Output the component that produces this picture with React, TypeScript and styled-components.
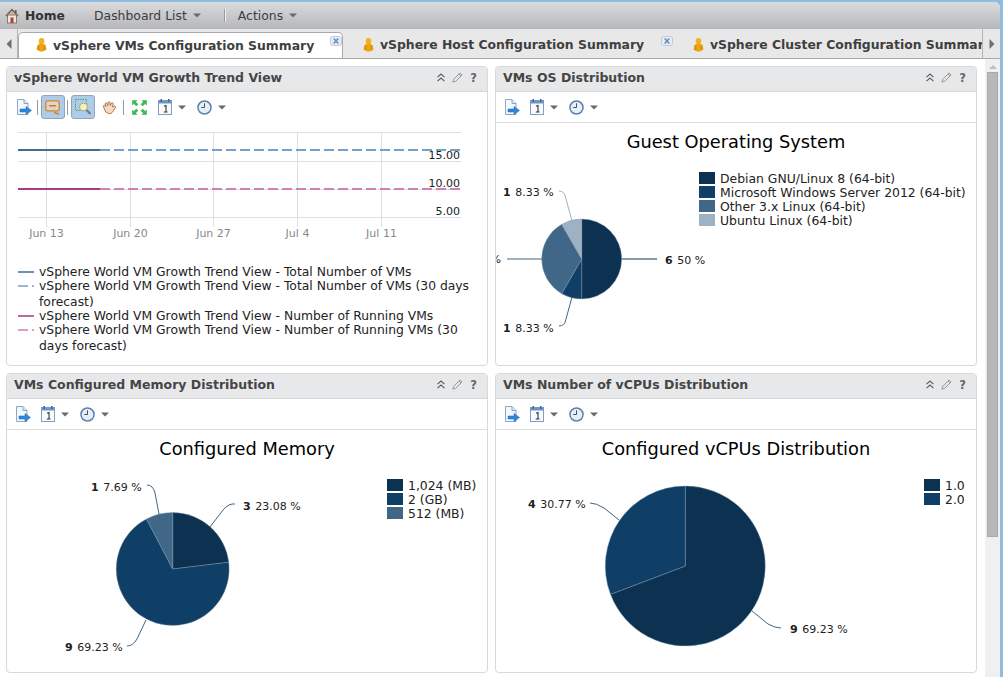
import styled, { createGlobalStyle } from "styled-components";

const GlobalStyle = createGlobalStyle`
  html, body {
    margin: 0;
    padding: 0;
    background: #8fbde0;
    overflow: hidden;
  }
  * {
    box-sizing: border-box;
  }
`;

const Page = styled.div`
  width: 1003px;
  height: 677px;
  padding: 2px 3px 0 0;
  background: #8fbde0;
  font-family: "DejaVu Sans", sans-serif;
  overflow: hidden;
`;

const Frame = styled.div`
  width: 1000px;
  height: 675px;
  display: flex;
  flex-direction: column;
  background: #fff;
  border-top-right-radius: 6px;
  overflow: hidden;
`;

const TopBar = styled.div`
  height: 27px;
  flex: none;
  display: flex;
  align-items: center;
  padding-left: 5px;
  background: linear-gradient(#dadbdd, #b6b7bb);
  color: #3c3c3c;
  font-size: 12.4px;
`;

const HomeLink = styled.span`
  margin-left: 6px;
  width: 69px;
  font-weight: bold;
  font-size: 12.3px;
  color: #333;
`;

const MenuItem = styled.span`
  display: flex;
  align-items: center;
  gap: 6px;
`;

const MenuDivider = styled.span`
  width: 2px;
  height: 13px;
  margin: 0 12px 0 23px;
  background: #f0f0f0;
  border-left: 1px solid #999;
`;

const TabBar = styled.div`
  height: 30px;
  flex: none;
  display: flex;
  background: #e8e8e8;
  border-bottom: 1px solid #a9a9a9;
`;

const ScrollButton = styled.div<{ $end?: boolean }>`
  width: 18px;
  flex: none;
  display: flex;
  align-items: center;
  justify-content: center;
  border-style: solid;
  border-color: #b5b5b5;
  border-width: ${(p) => (p.$end ? "0 0 0 1px" : "0 1px 0 0")};
  background: #e8e8e8;
`;

const TabStrip = styled.div`
  flex: 1;
  min-width: 0;
  display: flex;
  overflow: hidden;
`;

const Tab = styled.div<{ $active?: boolean; $w: number; $pad: number }>`
  position: relative;
  flex: none;
  width: ${(p) => p.$w}px;
  height: 27px;
  margin-top: 3px;
  padding: 0 0 2px ${(p) => p.$pad}px;
  display: flex;
  align-items: center;
  gap: 6px;
  background: ${(p) => (p.$active ? "#fff" : "transparent")};
  border: ${(p) => (p.$active ? "1px solid #a9a9a9" : "none")};
  border-bottom: none;
  border-radius: 5px 5px 0 0;
  color: #3f3f3f;
  font-weight: bold;
  font-size: 12.4px;
  white-space: nowrap;
`;

const TabClose = styled.span<{ $top: number }>`
  position: absolute;
  right: 0;
  top: ${(p) => p.$top}px;
  display: flex;
`;

const Main = styled.div`
  flex: 1;
  min-height: 0;
  display: flex;
  background: #fff;
`;

const Dashboard = styled.div`
  width: 985px;
  flex: none;
  display: grid;
  grid-template-columns: 482px 482px;
  grid-template-rows: 300px 300px;
  gap: 7px;
  padding: 7px 0 0 6px;
`;

const ScrollTrack = styled.div`
  width: 15px;
  flex: none;
  display: flex;
  flex-direction: column;
  align-items: flex-start;
  background: #f0f0f0;
  padding: 6px 0 0 2px;
`;

const ScrollUp = styled.svg`
  margin: 0 0 3px 2px;
`;

const ScrollThumb = styled.div`
  width: 11px;
  height: 465px;
  background: #b8b8b8;
  border: 1px solid #a8a8a8;
`;

const Panel = styled.section`
  display: flex;
  flex-direction: column;
  border: 1px solid #d9d9d9;
  border-radius: 4px;
  overflow: hidden;
  background: #fff;
`;

const PanelHeader = styled.header`
  height: 25px;
  flex: none;
  display: flex;
  align-items: center;
  justify-content: space-between;
  padding: 0 10px 3px 7px;
  background: #e7e8ea;
  border-bottom: 1px solid #d6d6d6;
`;

const PanelTitle = styled.h2`
  margin: 0;
  font-size: 12.5px;
  font-weight: bold;
  color: #454545;
  white-space: nowrap;
`;

const PanelActions = styled.div`
  display: flex;
  align-items: center;
  gap: 7px;
`;

const Toolbar = styled.div<{ $divided?: boolean }>`
  height: 31px;
  flex: none;
  display: flex;
  align-items: center;
  padding-left: ${(p) => (p.$divided ? 8 : 9)}px;
  border-bottom: 1px solid ${(p) => (p.$divided ? "#dedede" : "transparent")};
`;

const ToolButton = styled.span<{ $selected?: boolean; $gap?: number }>`
  width: ${(p) => (p.$selected ? "24px" : "auto")};
  height: 24px;
  flex: none;
  display: flex;
  align-items: center;
  justify-content: center;
  margin-right: ${(p) => p.$gap ?? 0}px;
  background: ${(p) => (p.$selected ? "#aecbe9" : "transparent")};
  border: ${(p) => (p.$selected ? "1px solid #8fa5bd" : "none")};
  border-radius: 3px;
`;

const ToolDivider = styled.span<{ $left: number; $right: number }>`
  width: 1px;
  height: 15px;
  flex: none;
  margin: 0 ${(p) => p.$right}px 0 ${(p) => p.$left}px;
  background: #9a9a9a;
`;

const PieBody = styled.div`
  flex: 1;
  min-height: 0;
  display: flex;
  flex-direction: column;
`;

const ChartTitle = styled.h3`
  margin: 8px 0 0;
  height: 29px;
  text-align: center;
  font-size: 17.8px;
  line-height: 22px;
  font-weight: normal;
  color: #000;
`;

const ChartRow = styled.div`
  display: flex;
  align-items: flex-start;
`;

const ChartText = styled.text`
  font-family: "DejaVu Sans", sans-serif;
  font-size: 11px;
  fill: #222;
`;

const PieLegend = styled.ul<{ $left: number }>`
  margin: 11px 0 0 ${(p) => p.$left}px;
  padding: 0;
  list-style: none;
`;

const PieLegendItem = styled.li`
  display: flex;
  align-items: center;
  gap: 5px;
  height: 14px;
  font-size: 12.4px;
  color: #222;
  white-space: nowrap;
`;

const Swatch = styled.span<{ $color: string }>`
  width: 16px;
  height: 12px;
  background: ${(p) => p.$color};
`;

const TrendLegend = styled.ul`
  margin: 0;
  padding: 0 0 0 11px;
  list-style: none;
  width: 466px;
`;

const TrendItem = styled.li`
  display: flex;
  align-items: flex-start;
  gap: 5px;
  margin-top: -2px;
  font-size: 12.35px;
  line-height: 16px;
  color: #222;
`;

const TrendKey = styled.svg`
  flex: none;
  margin-top: 7px;
`;

const ChartSvg = styled.svg`
  display: block;
  flex: none;
  overflow: visible;
`;

const DARK = "#0d3251";
const MID = "#0f3f66";
const STEEL = "#406787";
const PALE = "#9fb2c3";

function slicePath(cx: number, cy: number, r: number, from: number, to: number) {
  const a0 = (from / 100) * 2 * Math.PI;
  const a1 = (to / 100) * 2 * Math.PI;
  const x0 = cx + r * Math.sin(a0);
  const y0 = cy - r * Math.cos(a0);
  const x1 = cx + r * Math.sin(a1);
  const y1 = cy - r * Math.cos(a1);
  const large = to - from > 50 ? 1 : 0;
  return `M${cx} ${cy}L${x0} ${y0}A${r} ${r} 0 ${large} 1 ${x1} ${y1}Z`;
}

type Label = { x: number; y: number; n: string; pct: string; anchor?: "end" };
type Lead = { d: string; color: string; width?: number };

function Pie({
  width,
  height,
  cx,
  cy,
  r,
  slices,
  labels,
  leads,
}: {
  width: number;
  height: number;
  cx: number;
  cy: number;
  r: number;
  slices: { v: number; color: string }[];
  labels: Label[];
  leads: Lead[];
}) {
  let acc = 0;
  return (
    <ChartSvg width={width} height={height}>
      {leads.map((l, i) => (
        <path key={i} d={l.d} fill="none" stroke={l.color} strokeWidth={l.width ?? 1} />
      ))}
      {slices.map((s, i) => {
        const d = slicePath(cx, cy, r, acc, acc + s.v);
        acc += s.v;
        return <path key={i} d={d} fill={s.color} stroke="#7f97ad" strokeWidth={0.4} />;
      })}
      {labels.map((l, i) => (
        <ChartText key={i} x={l.x} y={l.y} textAnchor={l.anchor}>
          <tspan fontWeight="bold">{l.n}</tspan>
          <tspan dx="1"> {l.pct}</tspan>
        </ChartText>
      ))}
    </ChartSvg>
  );
}

function Caret() {
  return (
    <svg width="8" height="5" viewBox="0 0 8 5">
      <path d="M0 0.5h8L4 4.5z" fill="#6a6a6a" />
    </svg>
  );
}

function HomeIcon() {
  return (
    <svg width="14" height="16" viewBox="0 0 14 16">
      <path d="M1 8L7 1.5 13 8" fill="#c9b9a8" stroke="#7d5a48" strokeWidth="1.4" />
      <rect x="2.5" y="7" width="9" height="8" fill="#ece6dc" stroke="#8b7a6c" />
      <rect x="5.5" y="9.5" width="3" height="5.5" fill="#a8452f" />
      <rect x="10" y="2" width="1.6" height="3" fill="#7d5a48" />
    </svg>
  );
}

function PersonIcon() {
  return (
    <svg width="11" height="16" viewBox="0 0 12 17">
      <ellipse cx="6" cy="4.5" rx="3" ry="3.6" fill="#f2b01e" />
      <path d="M1.5 8.5Q6 5.8 10.5 8.5L11.5 13.5Q6 18 0.5 13.5Z" fill="#eda412" />
      <rect x="2.6" y="9" width="1" height="5" fill="#c98408" />
      <rect x="8.4" y="9" width="1" height="5" fill="#c98408" />
    </svg>
  );
}

function CloseIcon() {
  return (
    <svg width="12" height="10" viewBox="0 0 12 10">
      <rect x="0.5" y="0.5" width="11" height="9" rx="2" fill="#e6edf5" stroke="#b9cde2" />
      <path d="M3.7 2.5L8.3 7.5M8.3 2.5L3.7 7.5" stroke="#6f8fb3" strokeWidth="1.7" />
    </svg>
  );
}

function Arrow({ dir }: { dir: "left" | "right" }) {
  return (
    <svg width="6" height="10" viewBox="0 0 6 10">
      <path d={dir === "left" ? "M5.5 0v10L0.5 5z" : "M0.5 0v10L5.5 5z"} fill="#6f6f6f" />
    </svg>
  );
}

function ExportIcon() {
  return (
    <svg width="16" height="17" viewBox="0 0 16 17">
      <path d="M1.5 0.5H8L12 4.5V15.5H1.5Z" fill="#f4f8fc" stroke="#8aa7c6" />
      <path d="M8 0.5V4.5H12" fill="#dbe6f1" stroke="#8aa7c6" />
      <path d="M4 10H10V7.5L15.5 11.5 10 15.5V13H4Z" fill="#2f86d8" stroke="#1d66ae" strokeWidth="0.5" />
    </svg>
  );
}

function CalendarIcon() {
  return (
    <svg width="15" height="16" viewBox="0 0 15 16">
      <rect x="0.5" y="1.5" width="13" height="14" fill="#f8fafc" stroke="#7fa0c4" />
      <rect x="0.5" y="1.5" width="13" height="3" fill="#6d94c4" />
      <rect x="2.5" y="0" width="1.5" height="3" fill="#3d6aa4" />
      <rect x="10" y="0" width="1.5" height="3" fill="#3d6aa4" />
      <path d="M6 7.2L8 6.5V13M5.8 13H9.5" fill="none" stroke="#333" strokeWidth="1.1" />
    </svg>
  );
}

function ClockIcon() {
  return (
    <svg width="15" height="15" viewBox="0 0 16 16">
      <circle cx="8" cy="8" r="7" fill="#e6eff8" stroke="#5b82ad" strokeWidth="1.6" />
      <path d="M8 3.5V8H4.5" fill="none" stroke="#444" strokeWidth="1" />
    </svg>
  );
}

function ZoomOutIcon() {
  return (
    <svg width="16" height="15" viewBox="0 0 16 15">
      <rect x="0.8" y="0.8" width="13.4" height="10" rx="1.5" fill="#dcd6c6" stroke="#d9812a" strokeWidth="1.3" />
      <rect x="4" y="5" width="7" height="1.5" fill="#cf7a24" />
      <path d="M9 12.5L14 14" stroke="#d9812a" strokeWidth="1.5" />
    </svg>
  );
}

function ZoomBoxIcon() {
  return (
    <svg width="17" height="18" viewBox="0 0 17 18">
      <rect x="0.5" y="1.5" width="11" height="11" fill="none" stroke="#3aa64a" strokeDasharray="1.2 1.2" />
      <circle cx="8.5" cy="9" r="4" fill="#f4f2b8" stroke="#a8a886" />
      <path d="M11.5 12L15.5 16" stroke="#6c7c93" strokeWidth="2.2" />
    </svg>
  );
}

function HandIcon() {
  return (
    <svg width="15" height="15" viewBox="0 0 16 15">
      <path
        d="M2 8L1.5 5.5Q2.5 4.5 3.5 5.5L4 6.5 3.5 3Q4.5 1.8 5.5 3L6.2 5.5 6.5 2Q7.5 0.8 8.6 2L8.8 5.5 10 2.8Q11 2 12 3L11.2 7 13 5.8Q14.5 5.8 14.5 7.2L11.5 12Q10 14.5 7 14 3.5 13.5 2 8Z"
        fill="#f5d9c0"
        stroke="#a06a44"
        strokeWidth="0.9"
      />
    </svg>
  );
}

function ExpandIcon() {
  return (
    <svg width="15" height="15" viewBox="0 0 15 15">
      <path
        d="M0.5 0.5H5L3.6 1.9 6 4.3 4.3 6 1.9 3.6 0.5 5ZM14.5 0.5H10L11.4 1.9 9 4.3 10.7 6 13.1 3.6 14.5 5ZM0.5 14.5H5L3.6 13.1 6 10.7 4.3 9 1.9 11.4 0.5 10ZM14.5 14.5H10L11.4 13.1 9 10.7 10.7 9 13.1 11.4 14.5 10Z"
        fill="#35c04a"
        stroke="#1e8f33"
        strokeWidth="0.4"
      />
    </svg>
  );
}

function CollapseIcon() {
  return (
    <svg width="8" height="9" viewBox="0 0 8 9">
      <path d="M0.5 4.2L4 1 7.5 4.2M0.5 8.2L4 5 7.5 8.2" fill="none" stroke="#5c5c5c" strokeWidth="1.1" />
    </svg>
  );
}

function PencilIcon() {
  return (
    <svg width="11" height="11" viewBox="0 0 12 12">
      <path d="M1 11L1.8 8 8.8 1 11 3.2 4 10.2Z" fill="#e6e7e9" stroke="#8f8f8f" />
      <path d="M7.6 2.2L9.8 4.4" stroke="#8f8f8f" />
    </svg>
  );
}

const HelpMark = styled.span`
  width: 7px;
  font-size: 11.5px;
  font-weight: bold;
  color: #666;
  line-height: 12px;
  text-align: center;
`;

function Header({ title }: { title: string }) {
  return (
    <PanelHeader>
      <PanelTitle>{title}</PanelTitle>
      <PanelActions>
        <CollapseIcon />
        <PencilIcon />
        <HelpMark>?</HelpMark>
      </PanelActions>
    </PanelHeader>
  );
}

function TimeTools() {
  return (
    <>
      <ToolButton $gap={5}>
        <CalendarIcon />
      </ToolButton>
      <ToolButton $gap={11}>
        <Caret />
      </ToolButton>
      <ToolButton $gap={6}>
        <ClockIcon />
      </ToolButton>
      <ToolButton>
        <Caret />
      </ToolButton>
    </>
  );
}

function PieTools() {
  return (
    <Toolbar $divided>
      <ToolButton $gap={10}>
        <ExportIcon />
      </ToolButton>
      <TimeTools />
    </Toolbar>
  );
}

const xTicks = [
  { x: 39.5, label: "Jun 13" },
  { x: 123.5, label: "Jun 20" },
  { x: 206.5, label: "Jun 27" },
  { x: 290.5, label: "Jul 4" },
  { x: 374.5, label: "Jul 11" },
];

const yLines = [9.5, 38.5, 66.5, 94.5];

const AxisText = styled(ChartText)<{ $muted?: boolean }>`
  fill: ${(p) => (p.$muted ? "#888" : "#222")};
`;

function TrendChart() {
  return (
    <ChartSvg width="480" height="143">
      {yLines.map((y) => (
        <line key={y} x1="11" x2="454" y1={y} y2={y} stroke="#dcdfe3" />
      ))}
      {xTicks.map((t) => (
        <line key={t.x} x1={t.x} x2={t.x} y1="9" y2="104" stroke="#dcdfe3" />
      ))}
      <line x1="11" x2="93" y1="27" y2="27" stroke="#446a8c" strokeWidth="2" />
      <line x1="93" x2="454" y1="27" y2="27" stroke="#75a0c8" strokeWidth="2" strokeDasharray="10 4" />
      <line x1="11" x2="93" y1="66" y2="66" stroke="#a83a86" strokeWidth="2" />
      <line x1="93" x2="454" y1="66" y2="66" stroke="#d07fb8" strokeWidth="2" strokeDasharray="10 4" />
      <AxisText x="453" y="36" textAnchor="end">15.00</AxisText>
      <AxisText x="453" y="64" textAnchor="end">10.00</AxisText>
      <AxisText x="453" y="92" textAnchor="end">5.00</AxisText>
      {xTicks.map((t) => (
        <AxisText key={t.label} $muted x={t.x} y="114" textAnchor="middle">
          {t.label}
        </AxisText>
      ))}
    </ChartSvg>
  );
}

const trendSeries = [
  { text: "vSphere World VM Growth Trend View - Total Number of VMs", color: "#446a8c" },
  { text: "vSphere World VM Growth Trend View - Total Number of VMs (30 days forecast)", color: "#75a0c8", dashed: true },
  { text: "vSphere World VM Growth Trend View - Number of Running VMs", color: "#a83a86" },
  { text: "vSphere World VM Growth Trend View - Number of Running VMs (30 days forecast)", color: "#d07fb8", dashed: true },
];

function Legend({ left, items }: { left: number; items: { text: string; color: string }[] }) {
  return (
    <PieLegend $left={left}>
      {items.map((i) => (
        <PieLegendItem key={i.text}>
          <Swatch $color={i.color} />
          {i.text}
        </PieLegendItem>
      ))}
    </PieLegend>
  );
}

export default function App() {
  return (
    <Page>
      <GlobalStyle />
      <Frame>
        <TopBar>
          <HomeIcon />
          <HomeLink>Home</HomeLink>
          <MenuItem>
            Dashboard List <Caret />
          </MenuItem>
          <MenuDivider />
          <MenuItem>
            Actions <Caret />
          </MenuItem>
        </TopBar>
        <TabBar>
          <ScrollButton>
            <Arrow dir="left" />
          </ScrollButton>
          <TabStrip>
            <Tab $active $w={325} $pad={17}>
              <PersonIcon />
              vSphere VMs Configuration Summary
              <TabClose $top={3}>
                <CloseIcon />
              </TabClose>
            </Tab>
            <Tab $w={330} $pad={20}>
              <PersonIcon />
              vSphere Host Configuration Summary
              <TabClose $top={4}>
                <CloseIcon />
              </TabClose>
            </Tab>
            <Tab $w={330} $pad={20}>
              <PersonIcon />
              vSphere Cluster Configuration Summary
            </Tab>
          </TabStrip>
          <ScrollButton $end>
            <Arrow dir="right" />
          </ScrollButton>
        </TabBar>
        <Main>
          <Dashboard>
            <Panel>
              <Header title="vSphere World VM Growth Trend View" />
              <Toolbar>
                <ToolButton>
                  <ExportIcon />
                </ToolButton>
                <ToolDivider $left={5} $right={3} />
                <ToolButton $selected>
                  <ZoomOutIcon />
                </ToolButton>
                <ToolDivider $left={2} $right={3} />
                <ToolButton $selected $gap={7}>
                  <ZoomBoxIcon />
                </ToolButton>
                <ToolButton>
                  <HandIcon />
                </ToolButton>
                <ToolDivider $left={6} $right={8} />
                <ToolButton $gap={11}>
                  <ExpandIcon />
                </ToolButton>
                <TimeTools />
              </Toolbar>
              <TrendChart />
              <TrendLegend>
                {trendSeries.map((s) => (
                  <TrendItem key={s.text}>
                    <TrendKey width="16" height="2">
                      {s.dashed ? (
                        <path d="M0 1H10M14 1H16" stroke={s.color} strokeWidth="1.6" />
                      ) : (
                        <path d="M0 1H16" stroke={s.color} strokeWidth="1.6" />
                      )}
                    </TrendKey>
                    <span>{s.text}</span>
                  </TrendItem>
                ))}
              </TrendLegend>
            </Panel>

            <Panel>
              <Header title="VMs OS Distribution" />
              <PieTools />
              <PieBody>
                <ChartTitle>Guest Operating System</ChartTitle>
                <ChartRow>
                  <Pie
                    width={197}
                    height={200}
                    cx={85.7}
                    cy={99}
                    r={40}
                    slices={[
                      { v: 50, color: DARK },
                      { v: 8.33, color: MID },
                      { v: 33.34, color: STEEL },
                      { v: 8.33, color: PALE },
                    ]}
                    leads={[
                      { d: "M63 31Q69 31 70 39L76 61", color: PALE },
                      { d: "M11 99H46", color: PALE, width: 2 },
                      { d: "M126 99H161", color: "#8a9aa8", width: 2 },
                      { d: "M76 137L70 159Q69 166 63 166", color: STEEL },
                    ]}
                    labels={[
                      { x: 7, y: 36, n: "1", pct: "8.33 %" },
                      { x: 5, y: 103, n: "4", pct: "33.33 %", anchor: "end" },
                      { x: 169, y: 104, n: "6", pct: "50 %" },
                      { x: 7, y: 172, n: "1", pct: "8.33 %" },
                    ]}
                  />
                  <Legend
                    left={6}
                    items={[
                      { text: "Debian GNU/Linux 8 (64-bit)", color: DARK },
                      { text: "Microsoft Windows Server 2012 (64-bit)", color: MID },
                      { text: "Other 3.x Linux (64-bit)", color: STEEL },
                      { text: "Ubuntu Linux (64-bit)", color: PALE },
                    ]}
                  />
                </ChartRow>
              </PieBody>
            </Panel>

            <Panel>
              <Header title="VMs Configured Memory Distribution" />
              <PieTools />
              <PieBody>
                <ChartTitle>Configured Memory</ChartTitle>
                <ChartRow>
                  <Pie
                    width={373}
                    height={205}
                    cx={165.7}
                    cy={102}
                    r={56.5}
                    slices={[
                      { v: 23.08, color: DARK },
                      { v: 69.23, color: MID },
                      { v: 7.69, color: STEEL },
                    ]}
                    leads={[
                      { d: "M140 18Q146 18 148 26L152 47", color: STEEL },
                      { d: "M228 37Q222 36 216 43L203 60", color: STEEL },
                      { d: "M120 179Q126 179 130 172L139 153", color: STEEL },
                    ]}
                    labels={[
                      { x: 84, y: 24, n: "1", pct: "7.69 %" },
                      { x: 236, y: 43, n: "3", pct: "23.08 %" },
                      { x: 58, y: 184, n: "9", pct: "69.23 %" },
                    ]}
                  />
                  <Legend
                    left={7}
                    items={[
                      { text: "1,024 (MB)", color: DARK },
                      { text: "2 (GB)", color: MID },
                      { text: "512 (MB)", color: STEEL },
                    ]}
                  />
                </ChartRow>
              </PieBody>
            </Panel>

            <Panel>
              <Header title="VMs Number of vCPUs Distribution" />
              <PieTools />
              <PieBody>
                <ChartTitle>Configured vCPUs Distribution</ChartTitle>
                <ChartRow>
                  <Pie
                    width={423}
                    height={205}
                    cx={189.3}
                    cy={99}
                    r={80}
                    slices={[
                      { v: 69.23, color: DARK },
                      { v: 30.77, color: MID },
                    ]}
                    leads={[
                      { d: "M94 36Q100 36 108 41L123 53", color: STEEL },
                      { d: "M285 161Q279 161 272 157L256 144", color: STEEL },
                    ]}
                    labels={[
                      { x: 32, y: 41, n: "4", pct: "30.77 %" },
                      { x: 294, y: 166, n: "9", pct: "69.23 %" },
                    ]}
                  />
                  <Legend
                    left={5}
                    items={[
                      { text: "1.0", color: DARK },
                      { text: "2.0", color: MID },
                    ]}
                  />
                </ChartRow>
              </PieBody>
            </Panel>
          </Dashboard>
          <ScrollTrack>
            <ScrollUp width="8" height="4" viewBox="0 0 8 4">
              <path d="M0 4L4 0 8 4z" fill="#bdbdbd" />
            </ScrollUp>
            <ScrollThumb />
          </ScrollTrack>
        </Main>
      </Frame>
    </Page>
  );
}
